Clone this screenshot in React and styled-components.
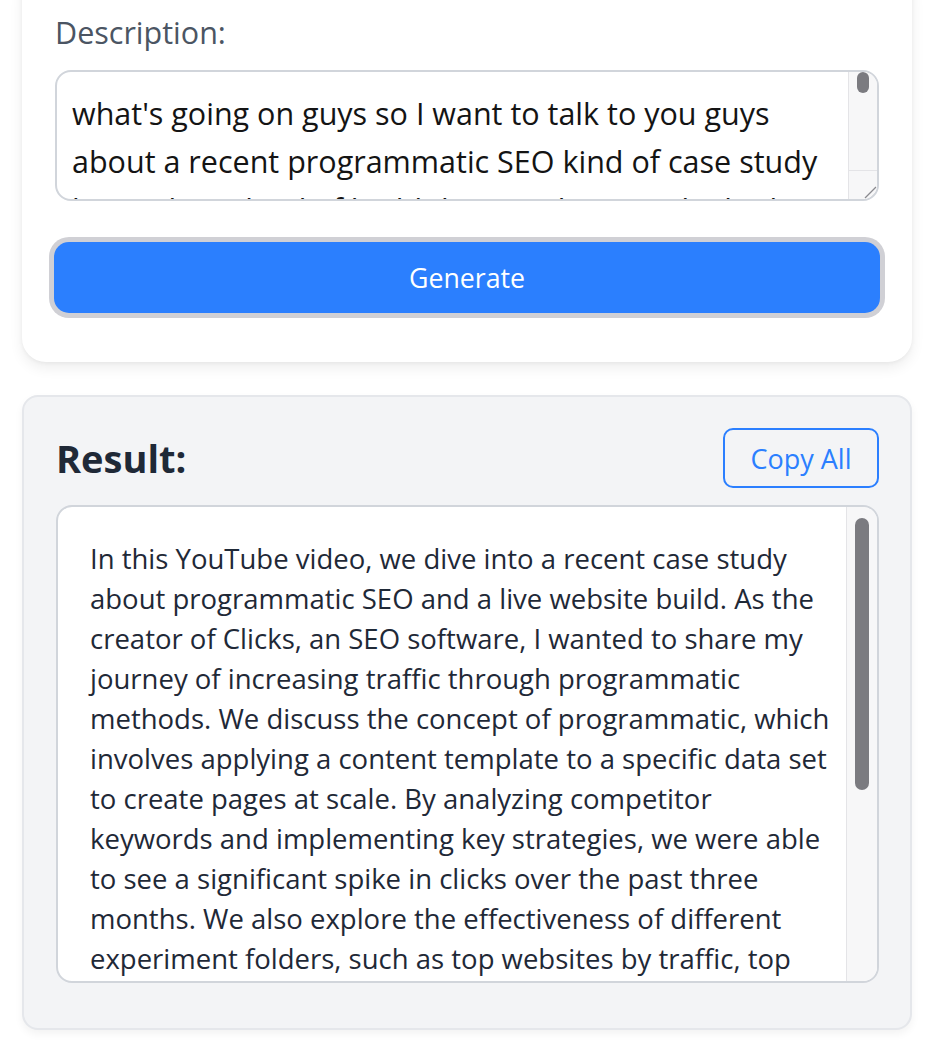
import styled, { createGlobalStyle } from "styled-components";
import { useState } from "react";

const GlobalStyle = createGlobalStyle`
  body {
    margin: 0;
    background: #ffffff;
    font-family: "Open Sans", "Noto Sans", sans-serif;
  }
  * {
    box-sizing: border-box;
  }
`;

const Page = styled.div`
  width: 890px;
  margin-left: 22px;
  display: flex;
  flex-direction: column;
  gap: 33px;
  padding-bottom: 30px;
`;

const FormCard = styled.div`
  margin-top: -30px;
  background: #ffffff;
  border-radius: 24px;
  box-shadow: 0 6px 14px rgba(0, 0, 0, 0.07), 0 1px 4px rgba(0, 0, 0, 0.05);
  padding: 42px 33px 49px 33px;
  display: flex;
  flex-direction: column;
`;

const Label = styled.label`
  font-size: 30.5px;
  line-height: 40px;
  color: #4b5563;
  margin-bottom: 18px;
`;

// bordered box holding a textarea and its scrollbar column side by side
const Field = styled.div`
  display: flex;
  width: ${(p) => p.$width}px;
  height: ${(p) => p.$height}px;
  border: 2px solid #d1d5db;
  border-radius: 16px;
  background: #ffffff;
  overflow: hidden;
`;

const DescArea = styled.textarea`
  flex: 1;
  min-width: 0;
  height: 100%;
  border: none;
  padding: 17px 10px 0 15px;
  font-family: inherit;
  font-size: 30.5px;
  line-height: 48px;
  color: #141414;
  white-space: pre-wrap;
  outline: none;
  resize: none;
  overflow: hidden;
  background: transparent;
`;

const ResultArea = styled.textarea`
  flex: 1;
  min-width: 0;
  height: 100%;
  border: none;
  padding: 32px 0 0 32px;
  font-family: inherit;
  font-size: 27.5px;
  line-height: 40px;
  color: #1f2937;
  white-space: pre;
  resize: none;
  outline: none;
  overflow: hidden;
  background: transparent;
`;

const ScrollColumn = styled.div`
  width: ${(p) => p.$width}px;
  flex-shrink: 0;
  display: flex;
  flex-direction: column;
  background: #f7f7f8;
  border-left: 1px solid #e4e4e7;
`;

const ScrollTrack = styled.div`
  flex: 1;
  display: flex;
  justify-content: center;
  padding-top: ${(p) => p.$top}px;
`;

const ScrollThumb = styled.div`
  width: ${(p) => p.$width}px;
  height: ${(p) => p.$height}px;
  border-radius: ${(p) => p.$width / 2}px;
  background: #7b7b80;
`;

const ScrollCorner = styled.div`
  height: 29px;
  border-top: 1px solid #e4e4e7;
  display: flex;
  justify-content: flex-end;
  align-items: flex-end;
`;

const GenerateButton = styled.button`
  margin-top: 41px;
  width: 826px;
  margin-left: -1px;
  height: 71px;
  border: none;
  border-radius: 15px;
  background: #2b7ffe;
  color: #ffffff;
  font-family: inherit;
  font-size: 26.7px;
  box-shadow: 0 0 0 5px #d0d0d5;
  cursor: pointer;
`;

const ResultCard = styled.div`
  background: #f3f4f6;
  border: 2px solid #e5e7eb;
  border-radius: 16px;
  box-shadow: 0 4px 8px rgba(0, 0, 0, 0.05);
  padding: 31px 31px 45px 32px;
  display: flex;
  flex-direction: column;
  gap: 17px;
`;

const ResultHeader = styled.div`
  display: flex;
  align-items: center;
  justify-content: space-between;
`;

const ResultTitle = styled.h2`
  margin: 0;
  font-size: 38px;
  font-weight: 700;
  color: #1f2937;
`;

const CopyButton = styled.button`
  width: 156px;
  height: 60px;
  border: 2px solid #2b7fff;
  border-radius: 10px;
  background: transparent;
  color: #2b7fff;
  font-family: inherit;
  font-size: 27px;
  cursor: pointer;
`;

const transcript =
  "what's going on guys so I want to talk to you guys\nabout a recent programmatic SEO kind of case study\nlive website kind of build that I'm doing and I think it's gonna be really interesting because I've been working on this for the last few months and we've seen some really cool results so let me just jump right into it so first of all for those of you who don't know me I'm the creator of Clicks which is an SEO software and I've been using programmatic SEO to grow traffic to a bunch of different sites and basically what programmatic means is you take a content template and you apply it to a data set so that you can create pages at scale";

const summary =
  "In this YouTube video, we dive into a recent case study\nabout programmatic SEO and a live website build. As the\ncreator of Clicks, an SEO software, I wanted to share my\njourney of increasing traffic through programmatic\nmethods. We discuss the concept of programmatic, which\ninvolves applying a content template to a specific data set\nto create pages at scale. By analyzing competitor\nkeywords and implementing key strategies, we were able\nto see a significant spike in clicks over the past three\nmonths. We also explore the effectiveness of different\nexperiment folders, such as top websites by traffic, top\nwebsites by category, and others, comparing how each\nfolder performed in terms of indexed pages and clicks.\nFinally, we share the lessons learned along the way,\nincluding what worked, what didn't, and what we would\ndo differently if we were starting this project again\nfrom scratch. If you're interested in scaling content\nwith programmatic SEO, this video is for you.";

const ResizeGrip = () => (
  <svg width="16" height="16" viewBox="0 0 16 16">
    <path d="M15 4 L4 15 M15 10 L10 15" stroke="#8a8a8f" strokeWidth="1.3" />
  </svg>
);

const App = () => {
  const [description, setDescription] = useState(transcript);
  const [result] = useState(summary);

  const handleCopy = () => {
    if (navigator.clipboard) navigator.clipboard.writeText(result);
  };

  return (
    <>
      <GlobalStyle />
      <Page>
        <FormCard>
          <Label htmlFor="description">Description:</Label>
          <Field $width={824} $height={131}>
            <DescArea
              id="description"
              value={description}
              onChange={(e) => setDescription(e.target.value)}
            />
            <ScrollColumn $width={29}>
              <ScrollTrack $top={0}>
                <ScrollThumb $width={12} $height={21} />
              </ScrollTrack>
              <ScrollCorner>
                <ResizeGrip />
              </ScrollCorner>
            </ScrollColumn>
          </Field>
          <GenerateButton>Generate</GenerateButton>
        </FormCard>
        <ResultCard>
          <ResultHeader>
            <ResultTitle>Result:</ResultTitle>
            <CopyButton onClick={handleCopy}>Copy All</CopyButton>
          </ResultHeader>
          <Field $width={823} $height={478}>
            <ResultArea value={result} readOnly wrap="off" />
            <ScrollColumn $width={31}>
              <ScrollTrack $top={11}>
                <ScrollThumb $width={14} $height={272} />
              </ScrollTrack>
            </ScrollColumn>
          </Field>
        </ResultCard>
      </Page>
    </>
  );
};

export default App;
